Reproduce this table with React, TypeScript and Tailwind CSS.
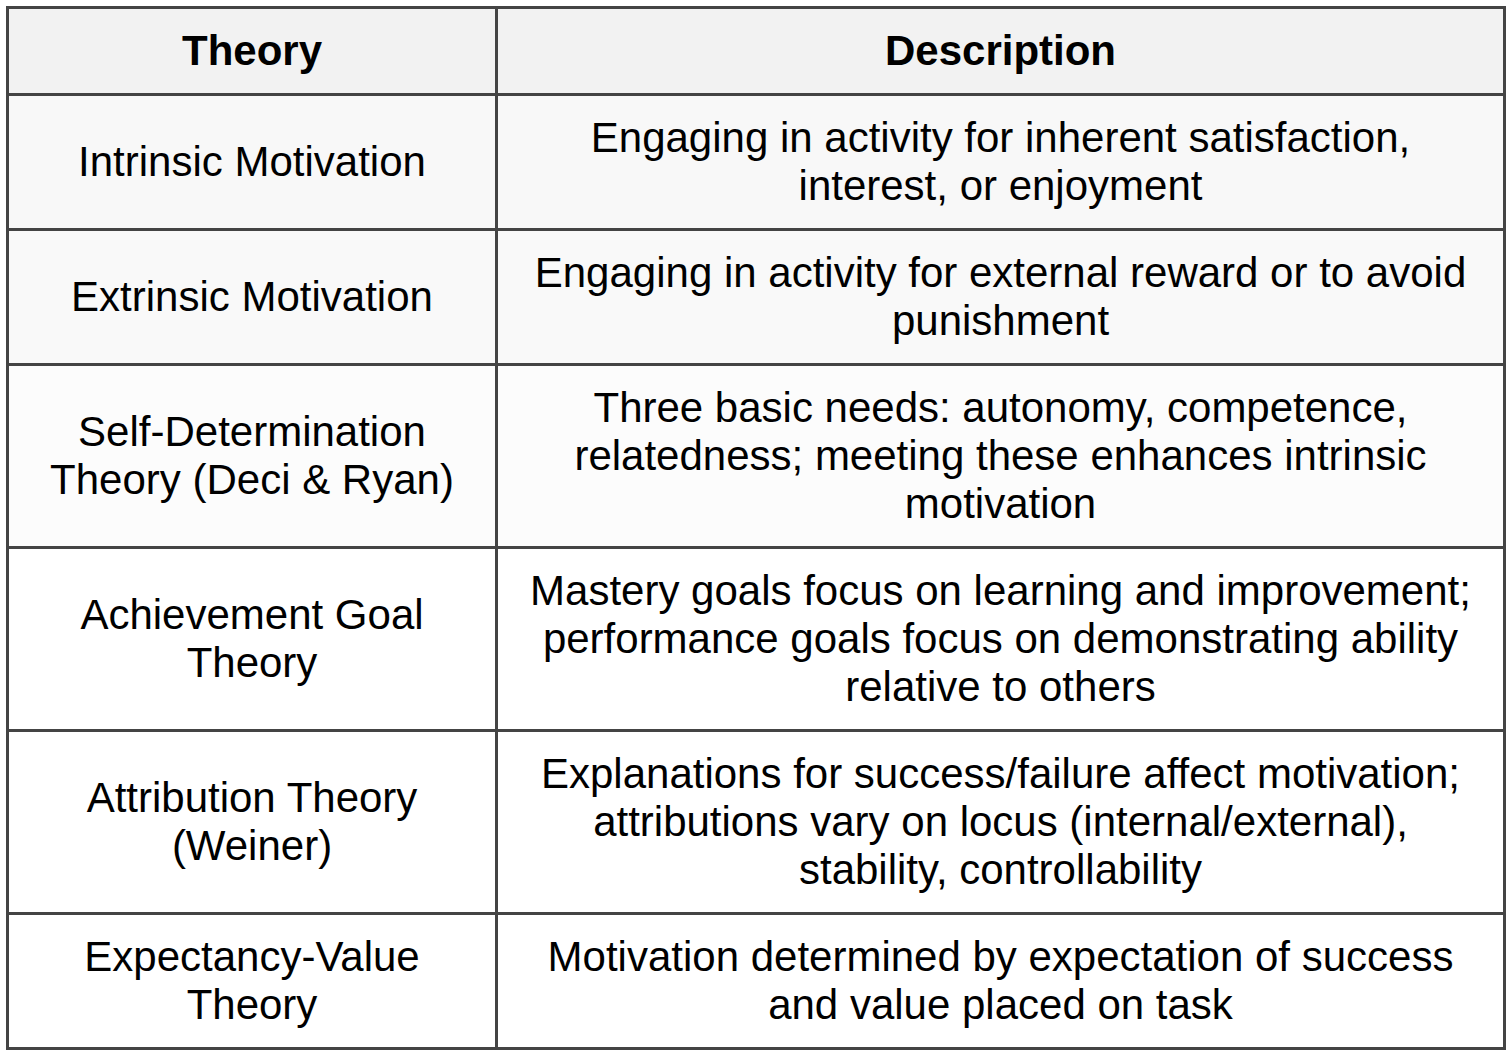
const rows: { theory: string; description: string; bg: string }[] = [
    {
        theory: 'Intrinsic Motivation',
        description: 'Engaging in activity for inherent satisfaction, interest, or enjoyment',
        bg: 'bg-[#f8f8f8]'
    },
    {
        theory: 'Extrinsic Motivation',
        description: 'Engaging in activity for external reward or to avoid punishment',
        bg: 'bg-[#f9f9f9]'
    },
    {
        theory: 'Self-Determination Theory (Deci & Ryan)',
        description:
            'Three basic needs: autonomy, competence, relatedness; meeting these enhances intrinsic motivation',
        bg: 'bg-[#fcfcfc]'
    },
    {
        theory: 'Achievement Goal Theory',
        description:
            'Mastery goals focus on learning and improvement; performance goals focus on demonstrating ability relative to others',
        bg: 'bg-white'
    },
    {
        theory: 'Attribution Theory (Weiner)',
        description:
            'Explanations for success/failure affect motivation; attributions vary on locus (internal/external), stability, controllability',
        bg: 'bg-white'
    },
    {
        theory: 'Expectancy-Value Theory',
        description: 'Motivation determined by expectation of success and value placed on task',
        bg: 'bg-white'
    }
];

export default function App() {
    return (
        <div className="min-h-screen bg-white p-[6px] font-['Liberation_Sans',Arial,sans-serif] text-black">
            <table className="w-[1500px] table-fixed border-collapse border-[3px] border-[#444444] text-center text-[42px] leading-[48px]">
                <colgroup>
                    <col className="w-[489px]" />
                    <col />
                </colgroup>
                <thead>
                    <tr className="bg-[#f2f2f2]">
                        <th className="border-[3px] border-[#444444] px-[14px] py-[18px] font-bold">Theory</th>
                        <th className="border-[3px] border-[#444444] px-[14px] py-[18px] font-bold">Description</th>
                    </tr>
                </thead>
                <tbody>
                    {rows.map((row) => (
                        <tr key={row.theory} className={row.bg}>
                            <td className="border-[3px] border-[#444444] px-[30px] py-[18px]">{row.theory}</td>
                            <td className="border-[3px] border-[#444444] px-[24px] py-[18px]">{row.description}</td>
                        </tr>
                    ))}
                </tbody>
            </table>
        </div>
    );
}
